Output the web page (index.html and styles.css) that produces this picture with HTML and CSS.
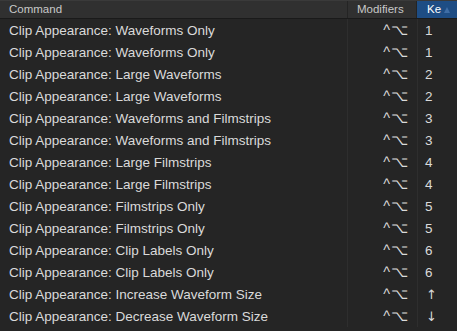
FILE: index.html
```html
<!DOCTYPE html>
<html>
<head>
<meta charset="utf-8">
<link rel="stylesheet" href="styles.css">
</head>
<body>
<div class="table">
  <div class="head">
    <div class="hc cmd">Command</div>
    <div class="hc mod">Modifiers</div>
    <div class="hc key sel">Ke<span class="arrow"></span></div>
  </div>
  <div class="rows">
    <div class="row"><div class="c cmd">Clip Appearance: Waveforms Only</div><div class="c mod">^⌥</div><div class="c key">1</div></div>
    <div class="row"><div class="c cmd">Clip Appearance: Waveforms Only</div><div class="c mod">^⌥</div><div class="c key">1</div></div>
    <div class="row"><div class="c cmd">Clip Appearance: Large Waveforms</div><div class="c mod">^⌥</div><div class="c key">2</div></div>
    <div class="row"><div class="c cmd">Clip Appearance: Large Waveforms</div><div class="c mod">^⌥</div><div class="c key">2</div></div>
    <div class="row"><div class="c cmd">Clip Appearance: Waveforms and Filmstrips</div><div class="c mod">^⌥</div><div class="c key">3</div></div>
    <div class="row"><div class="c cmd">Clip Appearance: Waveforms and Filmstrips</div><div class="c mod">^⌥</div><div class="c key">3</div></div>
    <div class="row"><div class="c cmd">Clip Appearance: Large Filmstrips</div><div class="c mod">^⌥</div><div class="c key">4</div></div>
    <div class="row"><div class="c cmd">Clip Appearance: Large Filmstrips</div><div class="c mod">^⌥</div><div class="c key">4</div></div>
    <div class="row"><div class="c cmd">Clip Appearance: Filmstrips Only</div><div class="c mod">^⌥</div><div class="c key">5</div></div>
    <div class="row"><div class="c cmd">Clip Appearance: Filmstrips Only</div><div class="c mod">^⌥</div><div class="c key">5</div></div>
    <div class="row"><div class="c cmd">Clip Appearance: Clip Labels Only</div><div class="c mod">^⌥</div><div class="c key">6</div></div>
    <div class="row"><div class="c cmd">Clip Appearance: Clip Labels Only</div><div class="c mod">^⌥</div><div class="c key">6</div></div>
    <div class="row"><div class="c cmd">Clip Appearance: Increase Waveform Size</div><div class="c mod">^⌥</div><div class="c key"><span class="dir">↑</span></div></div>
    <div class="row"><div class="c cmd">Clip Appearance: Decrease Waveform Size</div><div class="c mod">^⌥</div><div class="c key"><span class="dir">↓</span></div></div>
  </div>
</div>
</body>
</html>
```
FILE: styles.css
```css
html, body {
  margin: 0;
  padding: 0;
  background: #252525;
  overflow: hidden;
}
.table {
  width: 457px;
  height: 331px;
  font-family: "Liberation Sans", Arial, sans-serif;
  color: #dadada;
}
.head {
  display: flex;
  height: 19px;
  background: #303030;
  border-top: 1px solid #3a3a3a;
  border-bottom: 1px solid #1a1a1a;
  box-sizing: border-box;
  font-size: 11.5px;
  line-height: 17px;
  color: #c8c8c8;
}
.hc {
  box-sizing: border-box;
  padding-left: 9px;
  border-right: 1px solid #242424;
}
.head .cmd { width: 348px; }
.head .mod { width: 69px; padding-left: 9px; }
.head .key { flex: 1; border-right: none; position: relative; }
.sel {
  background: #1e4d84;
  color: #ffffff;
  padding-left: 10px;
}
.arrow {
  position: absolute;
  right: 7px;
  top: 6px;
  width: 0;
  height: 0;
  border-left: 3.5px solid transparent;
  border-right: 3.5px solid transparent;
  border-bottom: 6px solid #3f6ea6;
}
.row {
  display: flex;
  height: 22px;
  font-size: 13.5px;
  line-height: 23px;
}
.c {
  box-sizing: border-box;
  white-space: nowrap;
  overflow: hidden;
}
.row .cmd {
  width: 348px;
  padding-left: 9px;
  border-right: 1px solid #2e2e2e;
}
.row .mod {
  width: 70px;
  text-align: right;
  padding-right: 8px;
  border-right: 1px solid #2e2e2e;
  font-size: 14.5px;
  letter-spacing: 1px;
}
.row .key {
  flex: 1;
  padding-left: 7px;
}
.dir {
  font-family: "DejaVu Sans", sans-serif;
  font-size: 13px;
  padding-left: 1px;
}
```
